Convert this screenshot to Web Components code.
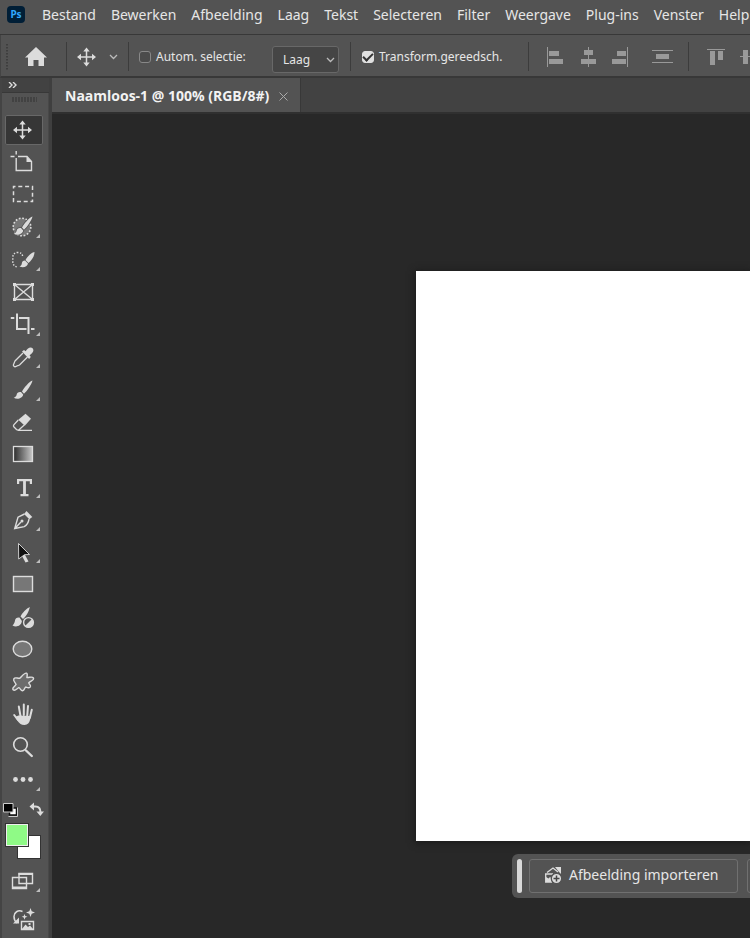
<!DOCTYPE html>
<html lang="nl">
<head>
<meta charset="utf-8">
<title>Naamloos-1</title>
<style>
html,body{margin:0;height:100%}
body{font-family:"Noto Sans","Open Sans",sans-serif;background:#282828;color:#e6e6e6;overflow:hidden;
--panel:#535353;--deep:#424242;--line:#383838;--icon:#dcdcdc}
</style>
</head>
<body>
<ps-app></ps-app>
<script>
const BASE = '*{box-sizing:border-box}button,select{font:inherit;color:inherit;margin:0;padding:0;border:0;background:none}svg{display:block;flex:none}';
function define(name, css, html) {
  customElements.define(name, class extends HTMLElement {
    constructor() {
      super();
      this.attachShadow({mode: 'open'});
    }
    connectedCallback() {
      const t = document.createElement('template');
      t.innerHTML = `<style>${BASE}${css}</style>${typeof html === 'function' ? html(this) : html}`;
      this.shadowRoot.replaceChildren(t.content.cloneNode(true));
    }
  });
}

/* Each icon: [label, flyout, viewBox origin y, drawing]. */
const brush = '<path d="M32.5 380.5c-3 1-8.500 7-10.500 11l2 2.200c3-2.500 7.500-9 8.500-13.200zM21 392c-2.500-.5-4 .8-4.300 2.500-.4 1.700-1.300 2.600-3 3.200 3.500 2.200 9 .7 9.500-3.200z"/>';
const TOOLS = [
 ['Verplaatsen',0,115,'<g fill="none" stroke="#dcdcdc" stroke-width="1.500"><path d="M22.500 122v16M14.500 130h16"/></g><path d="M22.500 120.500l3.200 4h-6.400zM22.500 139.500l3.200-4h-6.400zM13 130l4-3.200v6.400zM32 130l-4-3.200v6.400z"/>'],
 ['Tekengebied',0,147,'<path fill="none" stroke="#dcdcdc" stroke-width="1.400" d="M10.500 156.500h4M16.200 151v3.500M18 156.500h9l4.500 5v9H16.200V158"/><path d="M26.500 156.500v5.500h5.500z"/>'],
 ['Rechthoekig selectiekader',0,180,'<rect x="13.500" y="186.500" width="19" height="15" fill="none" stroke="#dcdcdc" stroke-width="1.500" stroke-dasharray="4 2.800" stroke-dashoffset="2"/>'],
 ['Selectiepenseel',1,212,'<circle cx="22" cy="227" r="8.800" fill="#777" stroke="#dcdcdc" stroke-width="1.600" stroke-dasharray="1.800 1.650"/><g stroke="#535353" stroke-width="1.500" paint-order="stroke" transform="translate(0 -164)">'+brush+'</g>'],
 ['Snelle selectie',1,245,'<path fill="none" stroke="#dcdcdc" stroke-width="1.400" stroke-dasharray="1.500 1.500" d="M22.500 256c0-2-1.500-3.500-5-3.500-3 0-4.700 2-4.700 5v4c0 3 1.700 5.500 5.200 5.500"/><path d="M34.500 252c-4 1-7.500 5-9 8l3 3c3-2.500 6-6.500 6-11zM25 260.500c-2 0-3 1.200-3.200 3-.1 1.200-1 2.300-2.300 3 3.500 1.500 8 .4 8.500-3z"/>'],
 ['Kader',0,277,'<path fill="none" stroke="#dcdcdc" stroke-width="1.400" d="M14.500 284.500h18v15h-18zM14.500 284.500l18 15M32.500 284.500l-18 15"/><path d="M13 283h3v3h-3zM31 283h3v3h-3zM13 298h3v3h-3zM31 298h3v3h-3z"/>'],
 ['Uitsnijden',1,310,'<path fill="none" stroke="#dcdcdc" stroke-width="2" d="M10.800 318h3.500M17 313.500v15.500h9.500M19 318h9.500v16M31 329h3.500"/>'],
 ['Pipet',1,342,'<path d="M22 351.500l2-1.500 1.600 1.200c1.500-2.300 3.300-3.700 5-3.700 1.600 0 2.800 1.200 2.800 2.700 0 1.800-1.500 3.500-3.800 5l1.200 1.700-1.700 2z"/><path fill="none" stroke="#dcdcdc" stroke-width="1.300" d="M23 353l-8 8c-.7 1-.5 2-1.500 3.500-.5 1.500 1 2.800 2.500 2 1-1 2.500-.8 3.500-1.500l8-8"/>'],
 ['Penseel',1,375,brush],
 ['Gum',0,407,'<path d="M25.500 413.800l5.500 5-6.200 7-6.500-6z"/><path fill="none" stroke="#dcdcdc" stroke-width="1.300" d="M18.300 420l-4.500 4.800c-.6.800-.5 1.500.2 2.200l2.500 2.500c.7.600 2 .6 2.800 0l5-4.500M18 430.400h14"/>'],
 ['Verloop',0,440,'<defs><linearGradient id="g"><stop stop-color="#2b2b2b"/><stop offset="1" stop-color="#c8c8c8"/></linearGradient></defs><rect x="13.500" y="446.500" width="19" height="15" fill="url(#g)" stroke="#dcdcdc" stroke-width="1.300"/>'],
 ['Tekst',1,472,'<path d="M17 479h15v5h-2.200v-2.700h-3.900v12.600h2.600v2.300h-8v-2.300h2.600v-12.600h-3.900v2.700H17z"/>'],
 ['Pen',1,505,'<path d="M26.500 511l5.800 6-3 2.200-5.200-5.200z"/><path fill="none" stroke="#dcdcdc" stroke-width="1.400" d="M24.500 514l-6.500 3.200-3.300 11.300 9.500-1.800c2.400-1.200 4.200-3.700 4.800-7.500M15 528.300l6-6.300"/><circle cx="22" cy="521" r="1.500"/>'],
 ['Padselectie',1,537,'<path d="M21.500 555l3-1 4 7.500-3 1z"/><path fill="#111" stroke="#dcdcdc" stroke-width=".9" d="M18.500 543.500l11 11-5 .2-5.800 4.300z"/>'],
 ['Rechthoek',0,570,'<rect x="13.500" y="576.500" width="19" height="15" fill="#777" stroke="#dcdcdc" stroke-width="1.400"/>'],
 ['Aanpassingspenseel',0,602,'<path d="M29.800 607c-3.200 1.300-7.800 6.200-9.300 9.500l2.500 2.500c3-2.300 6.200-8 6.800-12zM19.500 617.500c-2.600-.4-4.200 1-4.500 3-.3 2-1.200 3.700-2.500 5 3.600 2 8.800.7 9.400-4.500z"/><circle cx="28.500" cy="622.500" r="4.900" fill="#535353" stroke="#dcdcdc" stroke-width="1.400"/><path d="M32 619l-7 7c3 3 9 1 8.300-4-.1-1-.7-2.200-1.300-3z"/>'],
 ['Ovaal',0,635,'<ellipse cx="22.500" cy="649" rx="9.300" ry="7.700" fill="#777" stroke="#dcdcdc" stroke-width="1.400"/>'],
 ['Aangepaste vorm',0,667,'<path fill="#6c6c6c" stroke="#dcdcdc" stroke-width="1.400" stroke-linejoin="round" d="M26.500 673.200c1.400.6.600 2.700.4 4.300 2 .4 5.300-1.500 6.500.4 1.200 2.200-3 3.400-4.600 4.900.3 1.600 2.300 2.200 1.600 4-.8 1.800-3.300.7-4.700.2-1.500.9-1 3.800-3.200 3.700-1.800-.1-2.300-2.600-3.700-3-1.700.8-3.600 3.600-5.500 2.200-1.800-1.700 1.500-3.500 2.800-5.500-.6-1.700-3.300-3.500-2.300-5.500 1.200-2.200 3.800-.2 6-.7 1.600-1.200 4.500-5.700 6.700-5z"/>'],
 ['Handje',0,700,'<g fill="none" stroke="#dcdcdc" stroke-width="2" stroke-linecap="round"><path d="M20.500 716l-1.700-9.500M23.800 715v-10.500M27.200 716l.8-10M29.800 718l2-8.300M18 720l-3.800-5"/></g><path d="M18.500 715.500l12.200.5-.7 4c-.7 3-2.300 4.900-5.500 4.900-3.500 0-5-1.400-6.500-3.400l-3-4.500z"/>'],
 ['Zoomen',0,732,'<circle cx="20.500" cy="744.500" r="6.800" fill="none" stroke="#dcdcdc" stroke-width="1.600"/><path fill="none" stroke="#dcdcdc" stroke-width="2.400" stroke-linecap="round" d="M26 750.500l5.800 5.500"/>'],
 ['Meer gereedschappen',1,765,'<circle cx="15.500" cy="779.500" r="2.400"/><circle cx="23" cy="779.500" r="2.400"/><circle cx="30.500" cy="779.500" r="2.400"/>'],
 ['Schermmodus',1,867,'<path fill="#535353" stroke="#dcdcdc" stroke-width="1.400" d="M12.500 878.500h14v11h-14zM19 874.500h13.500v10H19z"/><path d="M18.500 874h14.500v2H18.500zM12 887.500h15v2H12z"/>'],
 ['Afbeelding genereren',0,904,'<path fill="none" stroke="#dcdcdc" stroke-width="1.500" d="M22.500 911.500c-4.500-2-8.500 1-8.500 5 0 3 1 5 3 6.500"/><path d="M13 923.500h6v-6zM30.500 908l1.200 3.200 3.300 1.300-3.300 1.200-1.200 3.300-1.200-3.300-3.300-1.200 3.300-1.300zM24.500 914l.8 2 2.200.8-2.200.8-.8 2.200-.8-2.200-2-.8 2-.8z"/><path fill="none" stroke="#dcdcdc" stroke-width="1.400" d="M21.500 921.500h12v8h-12z"/><path d="M22 929l3.500-4.500 2.500 2.500 2-1.500 3 3.500zM28.500 923h2v2h-2z"/>']
];

define('ps-tool',
 ':host{display:block;height:32px}:host([tall]){height:33px}button{display:block;width:38px;height:30px;border-radius:2px}:host([active]) button{background:#363636;box-shadow:inset 0 0 0 1px #686868}svg{fill:var(--icon)}',
 el => {
   const [label, fly, y, art] = TOOLS[+el.getAttribute('index')];
   return `<button aria-label="${label}"><svg width="38" height="30" viewBox="5 ${y} 38 30">${art}${fly ? `<path fill="#bdbdbd" d="M40 ${y+22}v4h-4z"/>` : ''}</svg></button>`;
 });

define('ps-toolbar',
 `:host{display:flex;flex-direction:column;background:var(--panel);width:52px;border-left:2px solid #444;border-right:3px solid #3f3f3f;box-shadow:inset -1px 0 #484848}
 .head{height:15px;background:var(--deep);border-bottom:1px solid var(--line);padding-left:6px;display:flex;align-items:center}
 .grip{height:22px;padding:4px 0 0 10px}
 .tools{padding-left:3px}
 .colors{display:grid;height:65px;margin-top:4px;grid-template:22px 43px / 1fr 1fr}
 .colors>button{align-self:start}
 .swap{justify-self:end;margin-right:5px}
 .swatches{grid-column:1/3;display:grid;grid-template:repeat(3,12px)/repeat(3,12px);padding-left:3px}
 .sw{border:1px solid #333}
 .fg{grid-area:1/1/3/3;background:#8ffa86;box-shadow:inset 0 0 0 1px #eee;z-index:1}
 .bg{grid-area:2/2/4/4;background:#fff}
 .end{padding:0 0 0 3px;display:grid;gap:6px}`,
 `<button class="head" aria-label="Deelvenster uitvouwen"><svg width="9" height="6"><path d="M1 0l3 3-3 3M5 0l3 3-3 3" fill="none" stroke="#ddd" stroke-width="1.400"/></svg></button>
 <div class="grip"><svg width="25" height="5"><path d="M0 2.500h25" stroke="#424242" stroke-width="5" stroke-dasharray="2 1"/></svg></div>
 <div class="tools">${TOOLS.slice(0,21).map((_, i) => `<ps-tool index="${i}" ${i===0?'active':''} ${i%2?'tall':''}></ps-tool>`).join('')}</div>
 <div class="colors">
  <button aria-label="Standaardkleuren"><svg width="17" height="16" viewBox="2 801 17 16"><path fill="#fff" stroke="#111" stroke-width="1.500" d="M9.500 808h7v7h-7z"/><path fill="none" stroke="#ccc" d="M8.500 816.500h9v-9"/><path fill="#000" stroke="#ccc" d="M3.500 803.500h9.500v8.500H3.500z"/></svg></button>
  <button class="swap" aria-label="Kleuren omwisselen"><svg width="15" height="16" viewBox="28 801 15 16"><path fill="none" stroke="#dcdcdc" stroke-width="2" d="M31.500 806.500h3c3.500 0 5 2 5 6"/><path fill="#dcdcdc" d="M28.500 806.500l4.500-4v8zM35.500 811.500h7.500l-3.700 4.500z"/></svg></button>
  <div class="swatches"><button class="sw fg" aria-label="Voorgrondkleur"></button><button class="sw bg" aria-label="Achtergrondkleur"></button></div>
 </div>
 <div class="end"><ps-tool index="21"></ps-tool><ps-tool index="22"></ps-tool></div>`);

define('ps-menubar',
 `:host{display:flex;align-items:center;height:35px;background:var(--panel);border-bottom:1px solid var(--line);padding:0 0 5px 7px;overflow:hidden}
 .logo{width:18px;height:17px;border-radius:4px;background:#001e36;color:#31a8ff;font:bold 10px/17px "Noto Sans",sans-serif;text-align:center;margin-right:17px;flex:none}
 nav{display:flex;gap:15px;font-size:14px;line-height:20px}
 button{white-space:nowrap}`,
 `<div class="logo">Ps</div><nav>${'Bestand Bewerken Afbeelding Laag Tekst Selecteren Filter Weergave Plug-ins Venster Help'.split(' ').map(t => `<button>${t}</button>`).join('')}</nav>`);

const R = (x,y,w,h) => `M${x} ${y}h${w}v${h}h${-w}z`;
const al = (label, w, d) => `<button aria-label="${label}"><svg width="${w}" height="20" fill="#999"><path d="${d}"/></svg></button>`;
define('ps-options',
 `:host{display:flex;align-items:center;height:43px;background:var(--panel);border-left:1px solid #444;border-bottom:2px solid var(--line);padding-top:2px;overflow:hidden;font-size:12px;line-height:18px;white-space:nowrap}
 :host>*,.sep,label,.pick,.group{flex:none}
 .sep{width:1px;height:29px;background:#3c3c3c}
 .grip{margin:0 17px 0 5px}.home{margin-right:19px}.move{margin:0 13px 0 10px}.chev{margin-right:10px}
 label{display:flex;align-items:center;gap:5px;margin-top:1px}
 input{appearance:none;margin:0;width:12px;height:12px;border:1px solid #888;border-radius:3px;background:#4b4b4b;display:grid;place-items:center;flex:none}
 input:checked{background:#e0e0e0;border-color:#e0e0e0}
 input:checked::after{content:"";width:8px;height:4px;border:solid #333;border-width:0 0 2px 2px;transform:translateY(-1px) rotate(-45deg)}
 .auto{margin-left:10px;width:133px}
 .pick{display:grid;align-items:center;margin:6px 11px 0 0}
 .pick>*{grid-area:1/1}.pick svg{justify-self:end;margin-right:4px;pointer-events:none}
 select{appearance:none;width:67px;height:27px;border:1px solid #686868;border-radius:3px;background:#454545;padding-left:10px}
 .tf{margin-left:11px;width:166px}
 .group{display:flex;gap:14px;padding-left:17px}
 .spread{padding:0 14px 0 24px}`,
 `<svg class="grip" width="2" height="26"><path d="M1 0v26" stroke="#3e3e3e" stroke-width="2" stroke-dasharray="1.500 1.500"/></svg>
 <button class="home" aria-label="Start"><svg width="22" height="20" fill="#dcdcdc"><path d="M11 0l11 10.500h-3V19h-5.500v-6h-5v6H3v-8.500H0z"/></svg></button>
 <span class="sep"></span>
 <button class="move" aria-label="Verplaatsen"><svg width="19" height="20" viewBox="13 120 19 20" fill="#dcdcdc">${TOOLS[0][3]}</svg></button>
 <button class="chev" aria-label="Voorinstellingen"><svg width="9" height="6"><path d="M1 1l3.500 3.500L8 1" fill="none" stroke="#bbb" stroke-width="1.300"/></svg></button>
 <span class="sep"></span>
 <label class="auto"><input type="checkbox"><span>Autom. selectie:</span></label>
 <div class="pick"><select aria-label="Selectietype"><option>Laag</option></select><svg width="9" height="6"><path d="M1 1l3.500 3.500L8 1" fill="none" stroke="#bbb" stroke-width="1.300"/></svg></div>
 <span class="sep"></span>
 <label class="tf"><input type="checkbox" checked><span>Transform.gereedsch.</span></label>
 <span class="sep"></span>
 <div class="group">${al('Links uitlijnen', 18, R(1,0,1,20)+R(3,4,10,5)+R(3,12,14,5))}${al('Horizontaal centreren', 18, R(10,0,1,20)+R(6,3,9,5)+R(3,12,15,5))}${al('Rechts uitlijnen', 18, R(17,0,1,20)+R(7,4,9,5)+R(2,12,14,5))}</div>
 <div class="group spread">${al('Verdelen', 22, R(0,3,21,1)+R(4,7,13,5)+R(0,15,21,1))}</div>
 <span class="sep"></span>
 <div class="group">${al('Boven uitlijnen', 20, R(1,2,18,1)+R(4,4,5,14)+R(12,4,5,9))}${al('Verticaal centreren', 20, R(0,9,19,1)+R(3,3,5,14)+R(11,5,5,10))}</div>`);

define('ps-tabs',
 `:host{display:flex;height:36px;background:var(--deep);border-bottom:2px solid #303030}
 .tab{display:flex;align-items:center;background:#535353;border-right:1px solid #383838;padding:2px 12px 0 13px;gap:10px;font:bold 14px/18px "Open Sans","Noto Sans",sans-serif;white-space:nowrap}
 .tab button:first-child{color:#f2f2f2}`,
 `<div class="tab"><button><slot></slot></button><button aria-label="Sluiten"><svg width="9" height="9"><path d="M.5.5l8 8M8.500.5l-8 8" stroke="#aaa" fill="none"/></svg></button></div>`);

define('ps-taskbar',
 `:host{display:flex;height:44px;background:var(--panel);border-radius:6px;padding:5px;gap:7px;width:max-content}
 .grab{width:5px;border-radius:3px;background:#d8d8d8}
 button{height:34px;border:1px solid #707070;border-radius:3px;display:flex;align-items:center;gap:7px;padding:0 19px 2px 14px;font-size:14px;line-height:20px;white-space:nowrap}
 .next{width:120px}.main{margin-right:2px}`,
 `<span class="grab"></span><button class="main"><svg width="18" height="18" fill="none" stroke="#dcdcdc" stroke-width="1.300"><path d="M1.700 7.500V16H8M1 8h8M3 6.500L9 2l5 4"/><path fill="#dcdcdc" stroke="none" d="M2 16v-5l2.500 1.500L6 11l2 1.500V16zM11 1h6v7l-2-2z"/><circle cx="12.500" cy="12.500" r="5.200" fill="#dcdcdc" stroke="#535353"/><path stroke="#444" stroke-width="1.500" d="M9.500 12.500h6M12.500 9.500v6"/></svg><slot></slot></button><button class="next" aria-label="Meer opties"></button>`);

define('ps-canvas',
 `:host{display:block;flex:1;background:#282828;overflow:hidden;padding:157px 0 0 364px}
 .doc{height:570px;background:#fff;box-shadow:0 1px 7px 1px #1a1a1a}
 ps-taskbar{margin:13px 0 0 96px}`,
 `<div class="doc"></div><ps-taskbar>Afbeelding importeren</ps-taskbar>`);

define('ps-app',
 `:host{display:flex;flex-direction:column;height:100vh;overflow:hidden}
 .work{display:flex;flex:1;min-height:0}ps-toolbar{flex:none}
 main{flex:1;min-width:0;display:flex;flex-direction:column}`,
 `<ps-menubar></ps-menubar><ps-options></ps-options><div class="work"><ps-toolbar></ps-toolbar><main><ps-tabs>Naamloos-1 @ 100% (RGB/8#)</ps-tabs><ps-canvas></ps-canvas></main></div>`);
</script>
</body>
</html>
